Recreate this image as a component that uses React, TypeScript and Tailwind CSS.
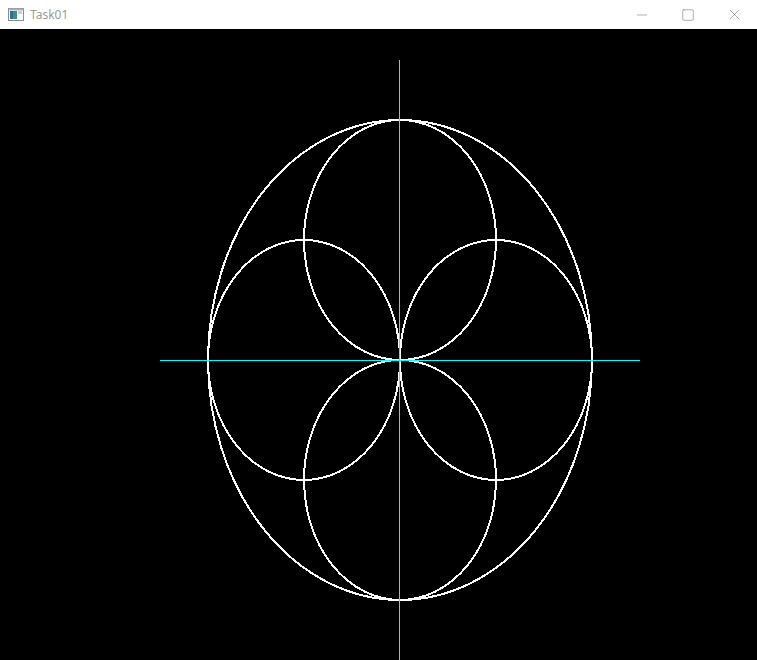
import { Minus, Square, X } from "lucide-react";

const ellipses = [
  { cx: 400, cy: 331, rx: 192, ry: 240 },
  { cx: 400, cy: 211, rx: 96, ry: 120 },
  { cx: 400, cy: 451, rx: 96, ry: 120 },
  { cx: 304, cy: 331, rx: 96, ry: 120 },
  { cx: 496, cy: 331, rx: 96, ry: 120 },
];

function AppIcon() {
  return (
    <svg width="16" height="13" viewBox="0 0 16 13" className="shrink-0">
      <rect x="0.5" y="0.5" width="15" height="12" fill="#ffffff" stroke="#8a8a8a" />
      <rect x="2" y="3" width="7" height="8" fill="#3f8f86" />
      <rect x="2" y="3" width="3" height="8" fill="#2f6f9a" />
      <rect x="10" y="3" width="4" height="3" fill="#c8d2d8" />
      <rect x="0.5" y="0.5" width="15" height="2" fill="#a9b4bc" />
    </svg>
  );
}

export default function App() {
  return (
    <div className="flex h-[660px] w-[757px] flex-col overflow-hidden bg-black">
      <header className="flex h-[29px] shrink-0 items-center bg-white">
        <div className="ml-[8px] flex items-center gap-[6px]">
          <AppIcon />
          <span className="text-[12px] text-[#9a9a9a] [font-family:'Noto_Sans',sans-serif]">Task01</span>
        </div>
        <div className="ml-auto flex h-full">
          <button type="button" className="flex h-full w-[46px] items-center justify-center text-[#8c8c8c]">
            <Minus size={16} strokeWidth={1} />
          </button>
          <button type="button" className="flex h-full w-[46px] items-center justify-center text-[#8c8c8c]">
            <Square size={14} strokeWidth={1.2} />
          </button>
          <button type="button" className="flex h-full w-[46px] items-center justify-center text-[#8c8c8c]">
            <X size={17} strokeWidth={1} />
          </button>
        </div>
      </header>

      <main className="flex-1 bg-black">
        <svg width="757" height="631" viewBox="0 0 757 631" className="block">
          {ellipses.map((e, i) => (
            <ellipse
              key={i}
              cx={e.cx}
              cy={e.cy}
              rx={e.rx}
              ry={e.ry}
              fill="none"
              stroke="#ffffff"
              strokeWidth="2"
              shapeRendering="crispEdges"
            />
          ))}
          <line x1="399.5" y1="31" x2="399.5" y2="631" stroke="#00ffff" strokeWidth="1" shapeRendering="crispEdges" />
          <line x1="160" y1="331.5" x2="640" y2="331.5" stroke="#00ffff" strokeWidth="1" shapeRendering="crispEdges" />
        </svg>
      </main>
    </div>
  );
}
